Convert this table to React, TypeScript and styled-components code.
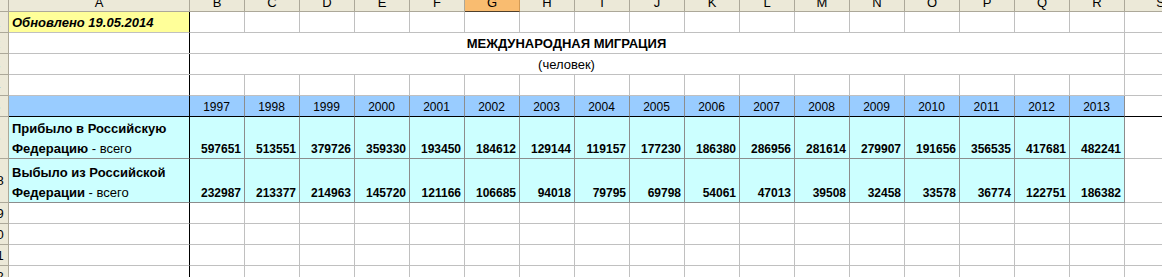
import { FC } from 'react';
import styled, { createGlobalStyle } from 'styled-components';

const GRID = '#c0c0c0';
const EDGE = '#8c8c8c';
const HEAD_LINE = '#aca899';

const COLUMNS = 'ABCDEFGHIJKLMNOPQRS'.split('');
const YEARS = [1997, 1998, 1999, 2000, 2001, 2002, 2003, 2004, 2005, 2006, 2007, 2008, 2009, 2010, 2011, 2012, 2013];
const ARRIVED = [
  597651, 513551, 379726, 359330, 193450, 184612, 129144, 119157, 177230, 186380, 286956, 281614, 279907, 191656,
  356535, 417681, 482241,
];
const DEPARTED = [
  232987, 213377, 214963, 145720, 121166, 106685, 94018, 79795, 69798, 54061, 47013, 39508, 32458, 33578, 36774,
  122751, 186382,
];

const GlobalStyle = createGlobalStyle`
  html, body {
    margin: 0;
    padding: 0;
    background: #fff;
    overflow: hidden;
  }
`;

const Sheet = styled.div`
  display: grid;
  grid-template-columns: 9px 181px repeat(17, 55px) 72px;
  grid-template-rows: 12px repeat(5, 21px) 42px 44px repeat(4, 21px);
  width: 1162px;
  height: 277px;
  overflow: hidden;
  font-family: 'Liberation Sans', Arial, sans-serif;
  font-size: 12px;
  color: #000;
  background: #fff;
`;

const ColHead = styled.div<{ $active?: boolean }>`
  box-sizing: border-box;
  background: ${(p) => (p.$active ? '#f9bc70' : '#ece9d8')};
  border-right: 1px solid ${(p) => (p.$active ? '#d29a55' : HEAD_LINE)};
  border-bottom: 1px solid ${(p) => (p.$active ? '#4f3f2c' : HEAD_LINE)};
  font-size: 13px;
  line-height: 5px;
  text-align: center;
  overflow: hidden;
`;

const RowHead = styled.div`
  box-sizing: border-box;
  display: flex;
  align-items: center;
  background: #ece9d8;
  border-right: 1px solid ${HEAD_LINE};
  border-bottom: 1px solid ${HEAD_LINE};
  font-size: 13px;
  overflow: hidden;

  & span {
    flex: none;
    width: 25px;
    margin-left: -16px;
    text-align: center;
  }
`;

const Cell = styled.div<{
  $bg?: string;
  $edge?: string;
  $right?: string;
  $bottom?: string;
  $align?: 'left' | 'center' | 'right';
  $bold?: boolean;
}>`
  box-sizing: border-box;
  display: flex;
  align-items: flex-end;
  justify-content: ${(p) => (p.$align === 'right' ? 'flex-end' : p.$align === 'center' ? 'center' : 'flex-start')};
  padding: 0 3px 0 2px;
  background: ${(p) => p.$bg ?? '#fff'};
  border-right: 1px solid ${(p) => p.$right ?? p.$edge ?? GRID};
  border-bottom: 1px solid ${(p) => p.$bottom ?? p.$edge ?? GRID};
  font-weight: ${(p) => (p.$bold ? 700 : 400)};
  line-height: 18px;
  white-space: nowrap;
  overflow: hidden;
`;

const UpdatedCell = styled(Cell)`
  padding-left: 3px;
  font-size: 13px;
  font-style: italic;
`;

const TitleCell = styled.div<{ $bold?: boolean }>`
  grid-column: span 18;
  box-sizing: border-box;
  display: flex;
  align-items: flex-end;
  justify-content: center;
  background: linear-gradient(to right, transparent 180px, #000 180px, #000 181px, transparent 181px);
  border-right: 1px solid ${GRID};
  border-bottom: 1px solid ${GRID};
  font-size: 13px;
  font-weight: ${(p) => (p.$bold ? 700 : 400)};
  line-height: 18px;
  white-space: nowrap;
`;

const Label = styled.div`
  font-size: 13px;
  line-height: 20px;
  margin-bottom: -1px;
  padding-left: 1px;

  & b {
    font-weight: 700;
  }
`;

const Line = styled.div``;

const RowNumber: FC<{ n: number }> = ({ n }) => (
  <RowHead>
    <span>{n}</span>
  </RowHead>
);

const BlankRow: FC<{ n: number; note?: string }> = ({ n, note }) => (
  <>
    <RowNumber n={n} />
    {COLUMNS.map((c, i) =>
      i === 0 && note ? (
        <UpdatedCell key={c} $bg="#ffff99" $right="#000" $bold>
          {note}
        </UpdatedCell>
      ) : (
        <Cell key={c} $right={i === 0 ? '#000' : undefined} />
      ),
    )}
  </>
);

const TitleRow: FC<{ n: number; text: string; bold?: boolean }> = ({ n, text, bold }) => (
  <>
    <RowNumber n={n} />
    <TitleCell $bold={bold}>{text}</TitleCell>
    <Cell />
  </>
);

const YearRow: FC<{ n: number }> = ({ n }) => (
  <>
    <RowNumber n={n} />
    <Cell $bg="#99ccff" $edge={EDGE} $right="#000" $bottom="#000" />
    {YEARS.map((y) => (
      <Cell key={y} $bg="#99ccff" $edge={EDGE} $bottom="#000" $align="center">
        {y}
      </Cell>
    ))}
    <Cell $bottom="#000" />
  </>
);

const DataRow: FC<{ n: number; first: string; second: string; values: number[] }> = ({ n, first, second, values }) => (
  <>
    <RowNumber n={n} />
    <Cell $bg="#ccffff" $edge={EDGE} $right="#000">
      <Label>
        <Line>
          <b>{first}</b>
        </Line>
        <Line>
          <b>{second}</b> - всего
        </Line>
      </Label>
    </Cell>
    {values.map((v, i) => (
      <Cell key={i} $bg="#ccffff" $edge={EDGE} $align="right" $bold>
        {v}
      </Cell>
    ))}
    <Cell />
  </>
);

const App: FC = () => (
  <>
    <GlobalStyle />
    <Sheet>
      <ColHead />
      {COLUMNS.map((c) => (
        <ColHead key={c} $active={c === 'G'}>
          {c}
        </ColHead>
      ))}

      <BlankRow n={1} note="Обновлено 19.05.2014" />
      <TitleRow n={2} text="МЕЖДУНАРОДНАЯ МИГРАЦИЯ" bold />
      <TitleRow n={3} text="(человек)" />
      <BlankRow n={4} />
      <YearRow n={5} />
      <DataRow n={6} first="Прибыло в Российскую" second="Федерацию" values={ARRIVED} />
      <DataRow n={18} first="Выбыло из Российской" second="Федерации" values={DEPARTED} />
      {[19, 20, 21, 22].map((n) => (
        <BlankRow key={n} n={n} />
      ))}
    </Sheet>
  </>
);

export default App;
